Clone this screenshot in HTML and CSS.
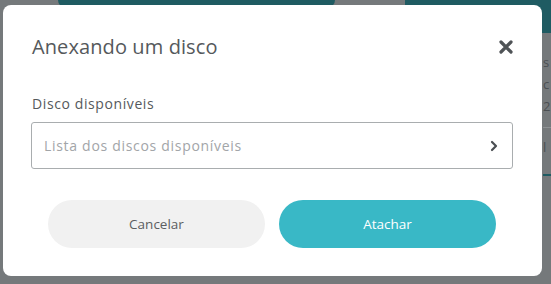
FILE: index.html
```html
<!DOCTYPE html>
<html lang="pt">
<head>
<meta charset="utf-8">
<link rel="stylesheet" href="styles.css">
</head>
<body>
<div class="backdrop">
  <div class="tabs">
    <div class="tab tab-a"></div>
    <div class="tab tab-b"></div>
  </div>
  <div class="side">
    <span class="frag">s</span>
    <span class="frag">c</span>
    <span class="frag">2</span>
    <div class="side-line"></div>
    <span class="frag">l</span>
    <div class="side-teal"></div>
  </div>
</div>

<div class="modal">
  <div class="modal-head">
    <h1 class="title">Anexando um disco</h1>
    <button class="close" aria-label="Fechar">
      <svg width="14" height="14" viewBox="0 0 14 14"><path d="M2 2 L12 12 M12 2 L2 12" stroke="#4f5356" stroke-width="3.2" stroke-linecap="round"/></svg>
    </button>
  </div>
  <div class="field">
    <label class="label">Disco disponíveis</label>
    <div class="select">
      <span class="placeholder">Lista dos discos disponíveis</span>
      <svg class="chev" width="8" height="12" viewBox="0 0 8 12"><path d="M2 2 L6 6 L2 10" fill="none" stroke="#4a4e52" stroke-width="2.2" stroke-linecap="round" stroke-linejoin="round"/></svg>
    </div>
  </div>
  <div class="actions">
    <button class="btn btn-cancel">Cancelar</button>
    <button class="btn btn-primary">Atachar</button>
  </div>
</div>
</body>
</html>
```
FILE: styles.css
```css
html, body {
  margin: 0;
  padding: 0;
}
body {
  width: 551px;
  height: 284px;
  overflow: hidden;
  background: #75797b;
  font-family: "Open Sans", "Noto Sans", sans-serif;
  position: relative;
}
.backdrop {
  height: 284px;
  position: relative;
}
.tabs {
  display: flex;
  align-items: flex-start;
}
.tab {
  background: #1f5b62;
}
.tab-a {
  margin-left: 58px;
  width: 277px;
  height: 8px;
  border-radius: 0 0 16px 16px;
}
.tab-b {
  margin-left: 70px;
  flex: 1;
  height: 33px;
  border-radius: 0 0 0 16px;
}
.side {
  margin-left: 543px;
  display: flex;
  flex-direction: column;
  color: #4b4f52;
  font-size: 13px;
  line-height: 18px;
  padding-top: 20px;
}
.frag {
  height: 22px;
}
.side-line {
  height: 1px;
  background: #8d9193;
  margin: 8px 0 10px;
}
.side-teal {
  margin-top: 14px;
  height: 2px;
  background: #1f5b62;
}
.modal {
  position: absolute;
  left: 3px;
  top: 5px;
  width: 539px;
  height: 271px;
  box-sizing: border-box;
  background: #fff;
  border-radius: 8px;
  padding: 30px 29px 28px 28px;
  display: flex;
  flex-direction: column;
}
.modal-head {
  display: flex;
  align-items: center;
  justify-content: space-between;
}
.title {
  margin: 0;
  font-size: 20px;
  line-height: 24px;
  font-weight: 400;
  color: #55595c;
  padding-left: 1px;
  letter-spacing: 0.1px;
}
.close {
  border: 0;
  background: none;
  padding: 0;
  width: 14px;
  height: 14px;
  display: flex;
}
.field {
  margin-top: 36px;
  display: flex;
  flex-direction: column;
}
.label {
  font-size: 14px;
  line-height: 18px;
  color: #55595c;
  padding-left: 1px;
  letter-spacing: 0.6px;
}
.select {
  margin-top: 9px;
  height: 47px;
  box-sizing: border-box;
  border: 1px solid #a9adaf;
  border-radius: 3px;
  display: flex;
  align-items: center;
  justify-content: space-between;
  padding: 0 14px 0 12px;
}
.placeholder {
  font-size: 14px;
  color: #a2a5a8;
  letter-spacing: 0.7px;
}
.chev {
  display: block;
}
.actions {
  margin-top: 31px;
  display: flex;
  justify-content: center;
  gap: 14px;
}
.btn {
  width: 217px;
  height: 48px;
  border: 0;
  border-radius: 24px;
  font-family: "Open Sans", "Noto Sans", sans-serif;
  font-size: 13.5px;
  letter-spacing: 0;
}
.btn-cancel {
  background: #f1f1f1;
  color: #5b5e61;
}
.btn-primary {
  background: #39b8c6;
  color: #fff;
}
```
